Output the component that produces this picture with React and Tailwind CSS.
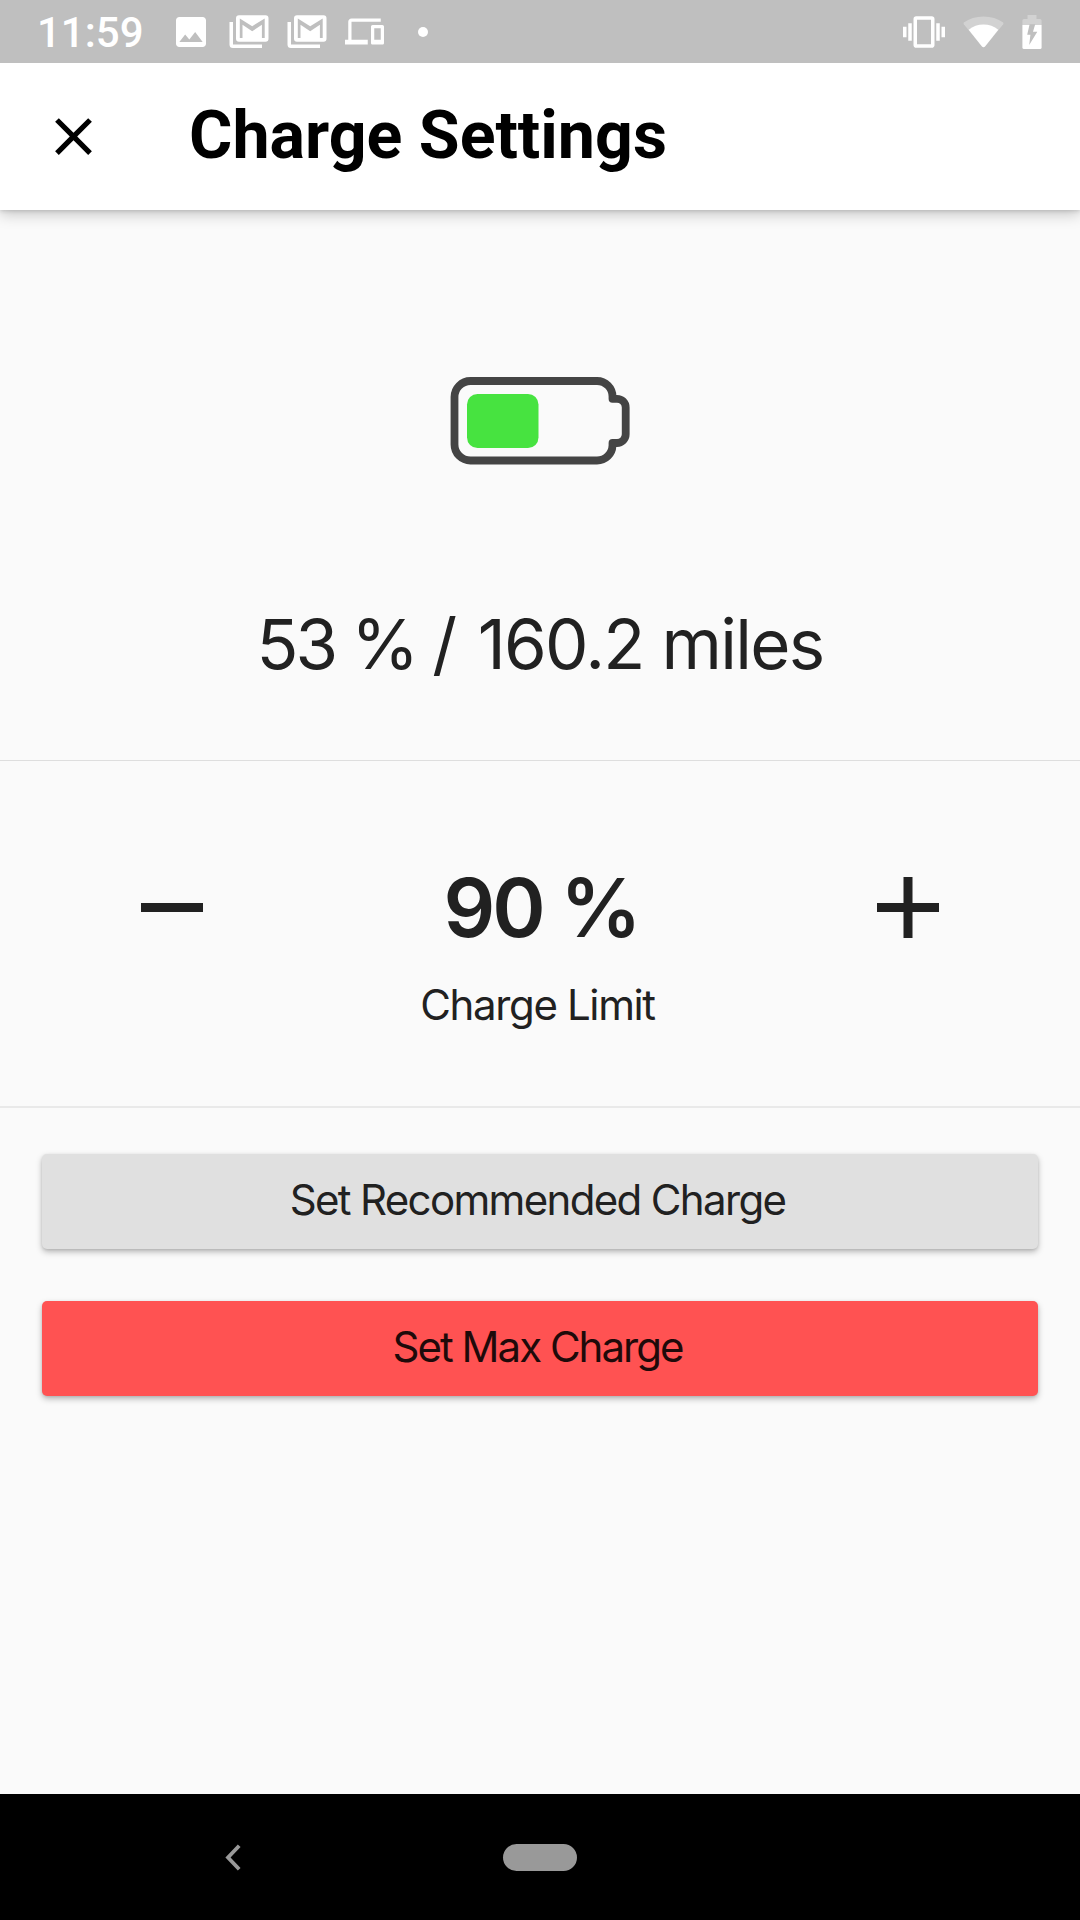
function ImageIcon() {
  return (
    <svg viewBox="0 0 24 24" className="size-10" fill="#fff">
      <path d="M21 19V5c0-1.1-.9-2-2-2H5c-1.1 0-2 .9-2 2v14c0 1.1.9 2 2 2h14c1.1 0 2-.9 2-2zM8.500 13.500l2.500 3.010L14.500 12l4.500 6H5l3.500-4.500z" />
    </svg>
  );
}

function MailStackIcon() {
  return (
    <svg viewBox="0 0 40 34" className="h-[34px] w-10" fill="#fff">
      <path d="M0.500 7H4v22.500h29V33H4Q0.500 33 0.500 29.500z" />
      <path
        fillRule="evenodd"
        d="M10 0.300h26.500a3 3 0 0 1 3 3v20.500a3 3 0 0 1-3 3H10a3 3 0 0 1-3-3V3.300a3 3 0 0 1 3-3zM10.800 3.400V23h2.700V9.800l9.700 6.400 9.700-6.400V23h2.800V3.400l-12.500 7.800z"
      />
    </svg>
  );
}

function DevicesIcon() {
  return (
    <svg viewBox="0 0 24 24" className="size-[39px]" fill="#fff">
      <path d="M4 6h18V4H4c-1.100 0-2 .9-2 2v11H0v3h14v-3H4V6zm19 2h-6c-.55 0-1 .45-1 1v10c0 .55.45 1 1 1h6c.55 0 1-.45 1-1V9c0-.55-.45-1-1-1zm-1 9h-4v-7h4v7z" />
    </svg>
  );
}

function VibrationIcon() {
  return (
    <svg viewBox="0 0 24 24" className="size-[42px]" fill="#fff">
      <path d="M0 15h2V9H0v6zm3 2h2V7H3v10zm19-8v6h2V9h-2zm-3 8h2V7h-2v10zM16.500 3h-9C6.670 3 6 3.670 6 4.500v15c0 .83.67 1.500 1.500 1.500h9c.83 0 1.500-.67 1.500-1.500v-15c0-.83-.67-1.500-1.500-1.500zM16 19H8V5h8v14z" />
    </svg>
  );
}

function WifiIcon() {
  return (
    <svg viewBox="0 0 41 32" className="h-8 w-[41px]" fill="#fff">
      <path
        opacity="0.3"
        d="M0.800 6.500Q9 0.500 20.500 0.500T40.200 6.500Q40.800 7.300 40.200 8.300L22 30.500Q20.500 32 19 30.500L0.800 8.300Q0.200 7.300 0.800 6.500z"
      />
      <path d="M5.700 13.800Q12 8.600 20.500 8.600T35.300 13.800L22 30.500Q20.500 32 19 30.500z" />
    </svg>
  );
}

function StatusBatteryIcon() {
  return (
    <svg viewBox="0 0 20 34" className="h-[34px] w-5">
      <path d="M5.500 0h9v4H18q1.600 0 1.600 1.600V10H0.400V5.600Q0.400 4 2 4h3.500z" fill="#fff" opacity="0.3" />
      <path d="M0.400 10h19.200v22.400Q19.600 34 18 34H2Q0.400 34 0.400 32.400z" fill="#fff" />
      <path d="M7.600 9.200h5.600l-2.200 7.600h4.300L7.200 30l1.200-10.200H5.200z" fill="#bfbfbf" />
    </svg>
  );
}

function StatusBar() {
  return (
    <header className="relative z-10 flex h-[63px] items-center bg-[#bfbfbf] pr-[38px] pl-[37px] text-white">
      <span className="w-[134px] pt-[3px] text-[42px] leading-none font-medium">11:59</span>
      <ImageIcon />
      <div className="ml-[18px]"><MailStackIcon /></div>
      <div className="ml-[18px]"><MailStackIcon /></div>
      <div className="ml-[18px]"><DevicesIcon /></div>
      <span className="ml-[34px] size-[10px] rounded-full bg-white" />
      <div className="ml-auto flex items-center">
        <VibrationIcon />
        <div className="ml-[18px]"><WifiIcon /></div>
        <div className="ml-[18px]"><StatusBatteryIcon /></div>
      </div>
    </header>
  );
}

function AppBar() {
  return (
    <div className="flex h-[147px] shrink-0 items-center bg-white pl-[42px] text-black shadow-[0_4px_14px_rgba(0,0,0,0.22),0_1px_4px_rgba(0,0,0,0.14)]">
      <button aria-label="Close">
        <svg viewBox="0 0 24 24" className="size-[63px]">
          <path d="M19 6.410L17.590 5 12 10.590 6.410 5 5 6.410 10.590 12 5 17.590 6.410 19 12 13.410 17.590 19 19 17.590 13.410 12z" />
        </svg>
      </button>
      <h1 className="ml-[84px] pb-[2px] text-[66.3px] leading-none font-bold">Charge Settings</h1>
    </div>
  );
}

function BatteryGraphic() {
  return (
    <svg viewBox="0 0 180 88" className="h-[88px] w-[180px]">
      <path
        d="M20.500 4H147a15.500 15.500 0 0 1 15.500 15.500V21.800h4.500a8.700 8.700 0 0 1 8.700 8.700V57.300a8.700 8.700 0 0 1-8.700 8.700h-4.500v2.500A15.500 15.500 0 0 1 147 83.500H20.500A16 16 0 0 1 4.500 67.500V20A16 16 0 0 1 20.500 4z"
        fill="none"
        stroke="#444"
        strokeWidth="7.800"
        strokeLinejoin="round"
      />
      <rect x="17" y="17" width="71.500" height="54" rx="10.500" fill="#47e340" />
    </svg>
  );
}

function ActionButton({ className, children }) {
  return (
    <button
      className={`flex h-[95px] w-full items-center justify-center rounded-[5px] pr-[5px] pb-[3px] text-[42px] leading-none shadow-[0_3px_6px_rgba(0,0,0,0.26),0_1px_3px_rgba(0,0,0,0.1)] ${className}`}
    >
      {children}
    </button>
  );
}

export default function App() {
  return (
    <div className="flex h-[1920px] w-[1080px] flex-col overflow-hidden bg-[#fafafa] font-['Roboto',sans-serif]">
      <StatusBar />
      <AppBar />
      <main className="flex-1 font-['Inter',sans-serif] text-[#212121]">
        <section className="flex h-[551px] flex-col items-center border-b border-[#dedede] pt-[167px]">
          <BatteryGraphic />
          <p className="mt-[139px] text-[69px] leading-[80px] tracking-[-1.7px] whitespace-pre">
            <span className="mr-[6px] tracking-[-3.1px]">53 % /</span> 160.2 miles
          </p>
        </section>
        <section className="flex h-[347px] items-start justify-between border-b-2 border-[#e9e9e9] px-[141px] pt-[102px]">
          <button aria-label="Decrease" className="mt-[40px] h-[9px] w-[62px] bg-[#212121]" />
          <div className="flex flex-col items-center">
            <p className="ml-[2px] text-[81px] leading-[90px] font-semibold tracking-[-3px]">90 %</p>
            <p className="mt-[27px] mr-[5px] text-[42px] leading-[50px] tracking-[-1.37px]">Charge Limit</p>
          </div>
          <button aria-label="Increase" className="mt-[14px]">
            <svg viewBox="0 0 62 61" className="h-[61px] w-[62px]" fill="#212121">
              <path d="M26.500 0h9v26H62v9H35.500v26h-9V35H0v-9h26.500z" />
            </svg>
          </button>
        </section>
        <section className="flex flex-col gap-[52px] px-[42px] pt-[46px]">
          <ActionButton className="bg-[#e0e0e0] tracking-[-1.66px]">Set Recommended Charge</ActionButton>
          <ActionButton className="bg-[#ff5252] tracking-[-1.98px] text-[#1f0a0a]">Set Max Charge</ActionButton>
        </section>
      </main>
      <nav className="grid h-[126px] grid-cols-[466px_148px_466px] items-center bg-black">
        <button aria-label="Back" className="pl-[225px]">
          <svg viewBox="0 0 16 27" className="h-[27px] w-4" fill="none" stroke="#999" strokeWidth="3.800">
            <path d="M14.200 1.700L3 13.500l11.200 11.800" />
          </svg>
        </button>
        <div className="h-[27px] w-[74px] justify-self-center rounded-full bg-[#999]" />
      </nav>
    </div>
  );
}
